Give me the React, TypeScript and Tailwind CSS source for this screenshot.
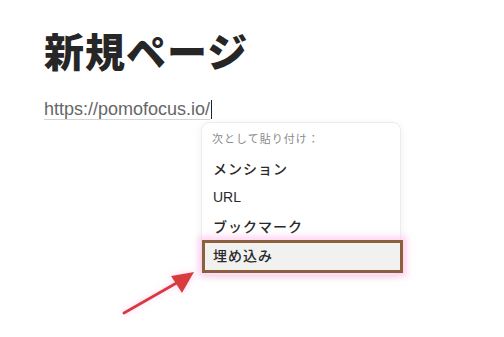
import React from "react";

export default function App() {
  const jp = { fontFamily: '"Noto Sans CJK JP", "Noto Sans", sans-serif' };
  return (
    <div className="relative w-[504px] h-[337px] bg-white overflow-hidden" style={jp}>
      <div className="pl-[44px] pt-[24px]">
        <h1 className="text-[40px] leading-[52px] font-black text-[#262626] tracking-[1px]">新規ページ</h1>
        <div className="mt-[21px] flex items-center h-[24px]">
          <span
            className="text-[18px] text-[#666666] underline decoration-[#d5d5d5] underline-offset-[4px]"
            style={{ fontFamily: '"Liberation Sans", "Noto Sans CJK JP", sans-serif' }}
          >
            https://pomofocus.io/
          </span>
          <span className="w-[1px] h-[19px] bg-[#222] ml-[1px]" />
        </div>
      </div>

      <div className="absolute left-[201px] top-[122px] w-[200px] h-[154px] rounded-[8px] bg-white border border-[#ececec] shadow-[0_2px_8px_rgba(0,0,0,0.06)]">
        <div className="pl-[10px] pt-[6px] text-[11px] leading-[18px] text-[#8a8a8a] tracking-[1px]">次として貼り付け：</div>
        <div className="flex flex-col mt-[7px]">
          <div className="pl-[11px] h-[29px] flex items-center text-[14px] font-medium text-[#2a2a2a] tracking-[1px]">メンション</div>
          <div className="pl-[11px] h-[29px] flex items-center text-[14px] text-[#2a2a2a]" style={{ fontFamily: '"Liberation Sans", sans-serif' }}>URL</div>
          <div className="pl-[11px] h-[29px] flex items-center text-[14px] font-medium text-[#2a2a2a] tracking-[1px]">ブックマーク</div>
          <div className="pl-[11px] h-[29px] flex items-center text-[14px] font-medium text-[#2a2a2a] bg-[#f1f1f0] tracking-[1px]">埋め込み</div>
        </div>
      </div>

      <div className="absolute left-[202px] top-[240px] w-[201px] h-[33px] border-[3px] border-[#8c5f3f] shadow-[0_0_6px_4px_rgba(255,190,235,0.6)]" />

      <svg className="absolute left-0 top-0" width="504" height="337" viewBox="0 0 504 337">
        <defs>
          <filter id="glow" x="-20%" y="-20%" width="140%" height="140%">
            <feDropShadow dx="0" dy="0" stdDeviation="3" floodColor="#ffb6e6" floodOpacity="0.7" />
          </filter>
        </defs>
        <g filter="url(#glow)">
          <line x1="124" y1="313" x2="180" y2="281" stroke="#d83b3a" strokeWidth="3" strokeLinecap="round" />
          <polygon points="194,272 171,276 182,293" fill="#d83b3a" />
        </g>
      </svg>
    </div>
  );
}
